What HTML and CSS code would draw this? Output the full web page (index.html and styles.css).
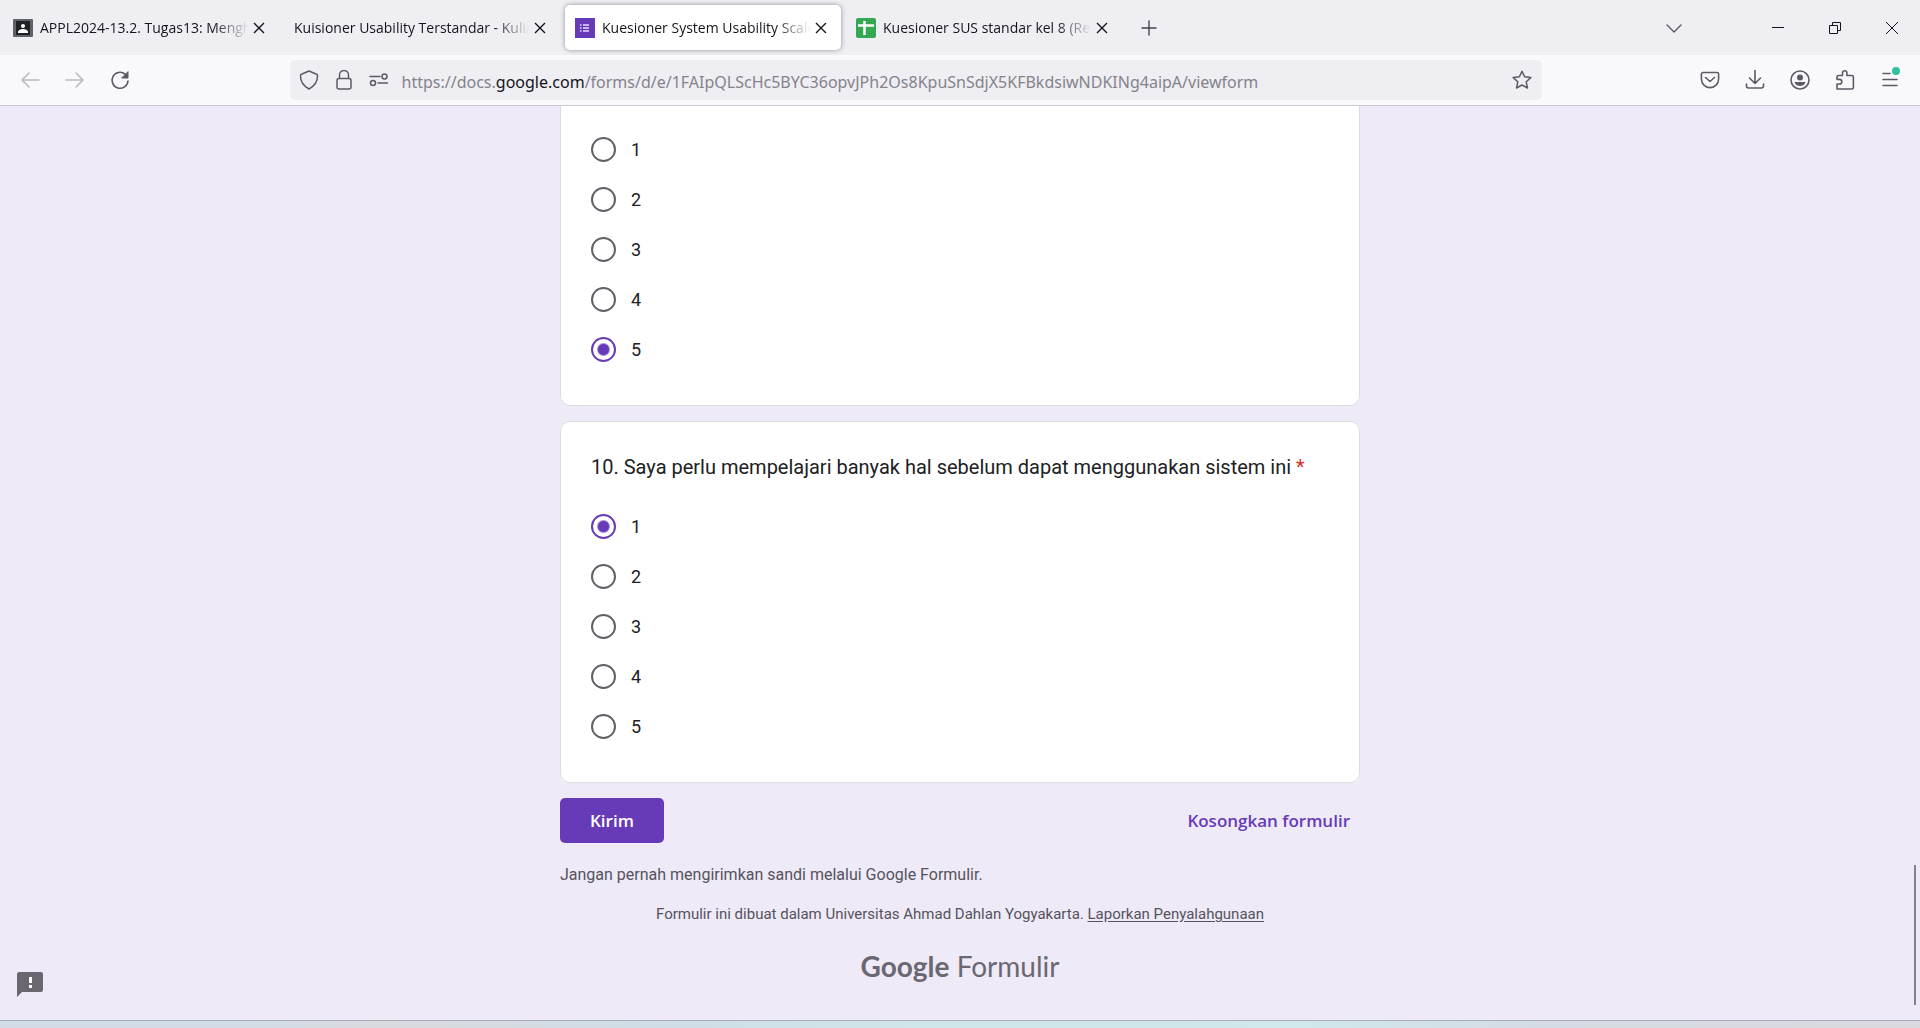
FILE: index.html
```html
<!DOCTYPE html>
<html lang="id">
<head>
<meta charset="utf-8">
<meta name="viewport" content="width=device-width, initial-scale=1">
<title>Kuesioner System Usability Scale</title>
<link rel="stylesheet" href="styles.css">
</head>
<body>
<header class="browser">
  <div class="tabstrip">
    <div class="tabs">
      <div class="tab">
        <button class="tab-main" type="button">
          <svg class="favicon" viewBox="0 0 20 20" aria-hidden="true"><rect y="1" width="20" height="18" rx="1" fill="#5f6368"/><rect x="3" y="3" width="14" height="14" fill="#202124"/><circle cx="10" cy="8" r="2" fill="#fff"/><path d="M5 15v-1c0-2 3-3 5-3s5 1 5 3v1z" fill="#fff"/></svg>
          <span class="tab-label">APPL2024-13.2. Tugas13: Mengh</span>
        </button>
        <button class="tab-close" type="button" aria-label="Tutup tab"><svg viewBox="0 0 20 20"><path d="M5 5l10 10M15 5L5 15"/></svg></button>
      </div>
      <div class="tab">
        <button class="tab-main" type="button"><span class="tab-label">Kuisioner Usability Terstandar - Kulia</span></button>
        <button class="tab-close" type="button" aria-label="Tutup tab"><svg viewBox="0 0 20 20"><path d="M5 5l10 10M15 5L5 15"/></svg></button>
      </div>
      <div class="tab tab-active">
        <button class="tab-main" type="button">
          <svg class="favicon" viewBox="0 0 20 20" aria-hidden="true"><rect width="20" height="20" fill="#673ab7"/><path d="M8 7h6M8 10h6M8 13h6M5 7h1.500M5 10h1.500M5 13h1.500" stroke="#e8def8" stroke-width="1.300"/></svg>
          <span class="tab-label">Kuesioner System Usability Scale</span>
        </button>
        <button class="tab-close" type="button" aria-label="Tutup tab"><svg viewBox="0 0 20 20"><path d="M5 5l10 10M15 5L5 15"/></svg></button>
      </div>
      <div class="tab">
        <button class="tab-main" type="button">
          <svg class="favicon" viewBox="0 0 20 20" aria-hidden="true"><rect width="20" height="20" rx="2" fill="#34a853"/><path d="M2 7.500h16M8.500 3v14" stroke="#fff" stroke-width="2.500"/></svg>
          <span class="tab-label">Kuesioner SUS standar kel 8 (Re</span>
        </button>
        <button class="tab-close" type="button" aria-label="Tutup tab"><svg viewBox="0 0 20 20"><path d="M5 5l10 10M15 5L5 15"/></svg></button>
      </div>
    </div>
    <button class="new-tab" type="button" aria-label="Tab baru"><svg viewBox="0 0 20 20"><path d="M10 3v14M3 10h14"/></svg></button>
    <button class="all-tabs" type="button" aria-label="Daftar tab"><svg viewBox="0 0 20 20"><path d="M3 7l7 7 7-7"/></svg></button>
    <div class="window-controls">
      <button type="button" aria-label="Perkecil"><svg viewBox="0 0 20 20"><path d="M4 9.500h12"/></svg></button>
      <button type="button" aria-label="Pulihkan"><svg viewBox="0 0 20 20"><path d="M4.500 7.500h8v8h-8zM7.500 7.500v-3h8v8h-3"/></svg></button>
      <button type="button" aria-label="Tutup"><svg viewBox="0 0 20 20"><path d="M4 4l12 12M16 4L4 16"/></svg></button>
    </div>
  </div>

  <div class="toolbar">
    <div class="nav-buttons">
      <button class="tool" type="button" aria-label="Kembali" disabled><svg viewBox="0 0 20 20"><path d="M19 10H2M9 3l-7 7 7 7"/></svg></button>
      <button class="tool" type="button" aria-label="Maju" disabled><svg viewBox="0 0 20 20"><path d="M1 10h17M11 3l7 7-7 7"/></svg></button>
      <button class="tool" type="button" aria-label="Muat ulang"><svg viewBox="0 0 20 20"><path d="M18 11a8 8 0 1 1-3-7l2 2"/><path d="M18 2v6h-6z" fill="currentColor" stroke-width="1"/></svg></button>
    </div>
    <div class="urlbar">
      <button class="url-icon" type="button" aria-label="Perlindungan"><svg viewBox="0 0 20 20"><path d="M10 1l7 3c1 0 1.500 1 1.500 2 0 6-3 10-8.500 13C4.500 16 1.500 12 1.500 6c0-1 .5-2 1.500-2z"/></svg></button>
      <button class="url-icon" type="button" aria-label="Informasi situs"><svg viewBox="0 0 20 20"><rect x="3" y="8.500" width="14" height="10.500" rx="2"/><path d="M5.500 8V5a4.500 4.500 0 0 1 9 0v3"/></svg></button>
      <button class="url-icon" type="button" aria-label="Izin"><svg viewBox="0 0 20 20"><circle cx="4" cy="13" r="2.500"/><circle cx="15.500" cy="6.500" r="2.500"/><path d="M1 6.500h10M9 13h9.500"/></svg></button>
      <div class="url-text" role="textbox" aria-label="Alamat" contenteditable="true" spellcheck="false">https://docs.<span class="url-domain">google.com</span>/forms/d/e/1FAIpQLScHc5BYC36opvJPh2Os8KpuSnSdjX5KFBkdsiwNDKINg4aipA/viewform</div>
      <button class="url-icon" type="button" aria-label="Markahi"><svg viewBox="0 0 20 20"><path d="M10 1.200l2.600 5.600 6.200.8-4.600 4.200 1.300 6.200-5.500-3-5.500 3 1.300-6.200L1.200 7.600l6.200-.8z"/></svg></button>
    </div>
    <div class="actions">
      <button class="tool" type="button" aria-label="Pocket"><svg viewBox="0 0 20 20"><path d="M3 2.500h14a1.600 1.600 0 0 1 1.600 1.600V9a8.600 8.600 0 0 1-17.200 0V4.100A1.600 1.600 0 0 1 3 2.500zM5.500 7.500L10 11.500l4.500-4"/></svg></button>
      <button class="tool" type="button" aria-label="Unduhan"><svg viewBox="0 0 20 20"><path d="M10 0v13M4.500 8l5.500 5.500L15.500 8M1.500 14v2a2 2 0 0 0 2 2h13a2 2 0 0 0 2-2v-2"/></svg></button>
      <button class="tool" type="button" aria-label="Akun"><svg viewBox="0 0 20 20"><circle cx="10" cy="10" r="9"/><circle cx="10" cy="7.500" r="3" fill="currentColor" stroke="none"/><path d="M4.500 12h11c-.5 2.500-3 4-5.500 4s-5-1.500-5.500-4z" fill="currentColor" stroke="none"/></svg></button>
      <button class="tool" type="button" aria-label="Ekstensi"><svg viewBox="0 0 20 20"><path d="M2 19V14h2.500a2.300 2.300 0 0 0 0-4.600H2V7a1.500 1.500 0 0 1 1.500-1.500h4V3a2.200 2.200 0 0 1 4.400 0v2.500h5A1.500 1.500 0 0 1 18.400 7v10.500a1.500 1.500 0 0 1-1.500 1.500z"/></svg></button>
      <button class="tool" type="button" aria-label="Menu"><svg viewBox="0 0 20 20"><path d="M3 3.500h7M3 9.500h14M3 15.500h14"/></svg><span class="badge"></span></button>
    </div>
  </div>
</header>

<main class="page">
  <form class="form">
    <fieldset class="card card-cut" aria-label="Pertanyaan 9">
      <label class="option"><input type="radio" name="q9"><span>1</span></label>
      <label class="option"><input type="radio" name="q9"><span>2</span></label>
      <label class="option"><input type="radio" name="q9"><span>3</span></label>
      <label class="option"><input type="radio" name="q9"><span>4</span></label>
      <label class="option"><input type="radio" name="q9" checked><span>5</span></label>
    </fieldset>
    <fieldset class="card" aria-labelledby="q10-title">
      <h2 class="question" id="q10-title">10. Saya perlu mempelajari banyak hal sebelum dapat menggunakan sistem ini <span class="required">*</span></h2>
      <label class="option"><input type="radio" name="q10" checked><span>1</span></label>
      <label class="option"><input type="radio" name="q10"><span>2</span></label>
      <label class="option"><input type="radio" name="q10"><span>3</span></label>
      <label class="option"><input type="radio" name="q10"><span>4</span></label>
      <label class="option"><input type="radio" name="q10"><span>5</span></label>
    </fieldset>
    <div class="form-actions">
      <button class="submit" type="button">Kirim</button>
      <button class="clear" type="reset">Kosongkan formulir</button>
    </div>
    <p class="warning">Jangan pernah mengirimkan sandi melalui Google Formulir.</p>
    <p class="origin">Formulir ini dibuat dalam Universitas Ahmad Dahlan Yogyakarta. <a href="#">Laporkan Penyalahgunaan</a></p>
    <a class="brand" href="#"><span class="brand-google">Google</span> <span>Formulir</span></a>
  </form>
  <button class="feedback" type="button" aria-label="Laporkan masalah"><svg viewBox="0 0 26 26"><path d="M2 0h22a2 2 0 0 1 2 2v16a2 2 0 0 1-2 2H5l-5 5V2a2 2 0 0 1 2-2z" fill="#6b6770"/><path d="M12 5h3v6h-3zM12 13h3v3h-3z" fill="#fff"/></svg></button>
  <div class="scroll-thumb"></div>
</main>
<div class="taskbar"></div>
</body>
</html>
```
FILE: styles.css
```css
* { box-sizing: border-box; }

body {
  margin: 0;
  min-height: 100vh;
  display: flex;
  flex-direction: column;
  background: #eeeaf8;
  font-family: Roboto, "Liberation Sans", sans-serif;
  color: #202124;
}

button {
  display: flex;
  align-items: center;
  justify-content: center;
  padding: 0;
  border: 0;
  background: none;
  color: inherit;
  font: inherit;
}

svg { display: block; flex: none; width: 20px; height: 20px; }

.browser { font-family: "Noto Sans", "Open Sans", sans-serif; color: #15141a; }
.browser svg { fill: none; stroke: currentColor; stroke-width: 2; stroke-linecap: round; stroke-linejoin: round; }
.browser .favicon { stroke: none; stroke-linecap: butt; }

/* Tab strip */
.tabstrip { display: flex; align-items: center; height: 55px; background: #efeef3; }
.tabs { display: flex; min-width: 0; }
.tab {
  display: flex;
  align-items: center;
  flex: 0 1 276px;
  width: 276px;
  min-width: 0;
  height: 45px;
  margin: 0 2px 0 3px;
  padding: 0 10px;
  border-radius: 5px;
}
.tab-active { background: #fff; box-shadow: 0 0 5px rgba(0, 0, 0, .4); }
.tab-main { flex: 1; min-width: 0; gap: 7px; justify-content: flex-start; }
.tab-label {
  flex: 1;
  overflow: hidden;
  white-space: nowrap;
  text-align: left;
  font-family: "Open Sans", "Noto Sans", sans-serif;
  font-size: 14px;
  line-height: 22px;
  mask-image: linear-gradient(to left, transparent, #000 36px);
}
.tab-close svg, .window-controls svg { stroke-width: 1; stroke-linecap: butt; stroke-linejoin: miter; }
.tab-close svg { stroke-width: 1.4; }
.new-tab { width: 50px; height: 45px; color: #45444c; }
.new-tab svg, .all-tabs svg { stroke-width: 1.4; }
.all-tabs { width: 50px; height: 45px; margin-left: auto; margin-right: 50px; color: #5b5b66; }
.window-controls { display: flex; }
.window-controls button { width: 57px; height: 45px; }

/* Navigation toolbar */
.toolbar {
  display: flex;
  align-items: center;
  height: 51px;
  background: #f9f9fc;
  border-bottom: 1px solid #cccbd4;
  color: #5b5b66;
}
.nav-buttons { display: flex; flex: 289 1 0; min-width: 150px; padding-left: 7px; }
.tool { width: 45px; height: 40px; position: relative; }
.tool svg { stroke-width: 1.6; }
.tool:disabled { color: #b9b9c0; }
.urlbar {
  display: flex;
  align-items: center;
  flex: 0 1 1252px;
  min-width: 0;
  height: 40px;
  padding: 0 2px;
  border-radius: 5px;
  background: #efeef3;
}
.url-icon { flex: none; width: 35px; height: 40px; }
.url-icon svg { stroke-width: 1.5; }
.url-text {
  flex: 1;
  min-width: 0;
  padding: 3px 0 0 5px;
  overflow: hidden;
  white-space: nowrap;
  font-size: 16px;
  line-height: 26px;
  color: #84838a;
}
.url-domain { color: #15141a; }
.actions { display: flex; flex: 379 1 0; justify-content: flex-end; min-width: 232px; padding-right: 8px; }
.badge {
  position: absolute;
  top: 7px;
  right: 12px;
  width: 8px;
  height: 8px;
  border-radius: 50%;
  background: #2fbf9d;
}

/* Form page */
.page { position: relative; flex: 1; padding: 0 16px; }
.form { display: flex; flex-direction: column; max-width: 800px; margin: 0 auto; }
.card {
  min-width: 0;
  margin: 0 0 15px;
  padding: 30px 30px 31px;
  border: 1px solid #dadce0;
  border-radius: 10px;
  background: #fff;
}
.card-cut { padding-top: 18px; border-top: 0; border-radius: 0 0 10px 10px; }
.question { margin: 0 0 19px; font-size: 20px; font-weight: 400; line-height: 30px; }
.required { color: #d93025; }
.option { display: flex; align-items: center; gap: 15px; height: 50px; font-size: 18px; }
.option input {
  appearance: none;
  width: 25px;
  height: 25px;
  margin: 0;
  border: 2px solid #5f6368;
  border-radius: 50%;
}
.option input:checked {
  border-color: #673ab7;
  background: radial-gradient(circle, #673ab7 5px, transparent 7px);
}
.form-actions {
  display: flex;
  justify-content: space-between;
  font-family: "Open Sans", Roboto, sans-serif;
  font-size: 17px;
  font-weight: 600;
}
.submit { height: 45px; padding: 0 30px; border-radius: 5px; background: #673ab7; color: #fff; }
.clear { height: 45px; padding: 0 10px; color: #673ab7; }
.warning, .origin { margin: 0; font-size: 16px; line-height: 20px; color: #56535c; }
.warning { margin-top: 22px; }
.origin { margin-top: 19px; text-align: center; font-size: 15px; }
.origin a { color: inherit; text-underline-offset: 2px; }
.brand {
  align-self: center;
  margin: 24px 0 32px;
  font-family: Lato, sans-serif;
  font-size: 28px;
  line-height: 36px;
  color: #6b6770;
  text-decoration: none;
}
.brand-google { font-weight: 700; }
.feedback { position: absolute; left: 17px; bottom: 22px; }
.feedback svg { width: 26px; height: 26px; }
.scroll-thumb { position: absolute; right: 4px; bottom: 15px; width: 2px; height: 140px; background: #858389; }

.taskbar {
  height: 8px;
  border-top: 1px solid #a9adba;
  background: linear-gradient(90deg, #d2dce6 0, #d2dce6 12%, #d9dade 20%, #cfdde6 35%, #cfe6ea 48%, #cfe8ec 68%, #d5dbe3 80%, #dad9df);
}
```
